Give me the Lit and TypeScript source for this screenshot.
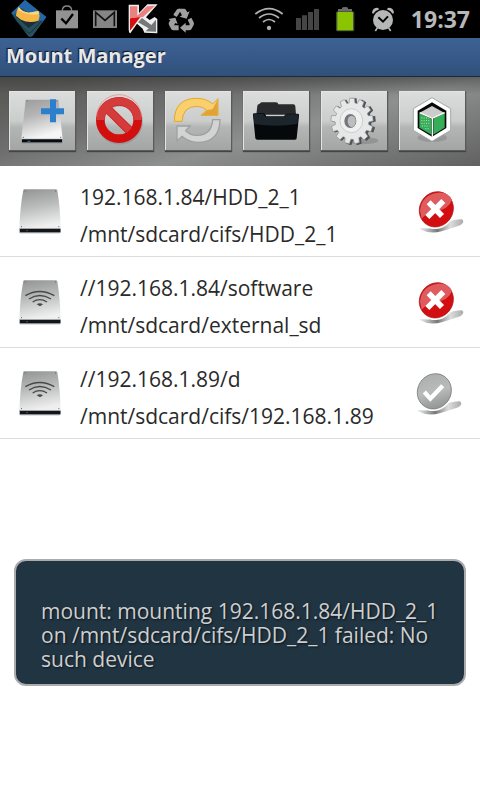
import { LitElement, html, css, svg, nothing } from "lit";
import { customElement, property } from "lit/decorators.js";

type Mount = { source: string; target: string; network: boolean; mounted: boolean };

const MOUNTS: Mount[] = [
  { source: "192.168.1.84/HDD_2_1", target: "/mnt/sdcard/cifs/HDD_2_1", network: false, mounted: false },
  { source: "//192.168.1.84/software", target: "/mnt/sdcard/external_sd", network: true, mounted: false },
  { source: "//192.168.1.89/d", target: "/mnt/sdcard/cifs/192.168.1.89", network: true, mounted: true },
];

const gearPath = (cx: number, cy: number, outer: number, inner: number, teeth: number) => {
  const points: string[] = [];
  for (let i = 0; i < teeth; i++) {
    for (const [f, r] of [[-0.36, inner], [-0.24, outer], [0.24, outer], [0.36, inner]]) {
      const a = ((i + f) / teeth) * Math.PI * 2 - Math.PI / 2;
      points.push(`${(cx + Math.cos(a) * r * 0.92).toFixed(1)} ${(cy + Math.sin(a) * r).toFixed(1)}`);
    }
  }
  return `M${points.join("L")}Z`;
};

/* Status bar glyphs, drawn on a grid of three units to the pixel. */
const statusLeft = [
  html`<svg viewBox="30 0 114 114" aria-hidden="true">
    <path d="M34 39L75 0L139 51L98 107Q90 113 84 107Z" fill="#28505c"/>
    <path d="M34 39L75 0L139 51L126 68L64 24L40 46Z" fill="#2467a8"/>
    <path d="M36 44L48 54L112 66L130 62L98 107Q90 113 84 107Z" fill="#28505c"/>
    <path d="M46 60l38 38q5 4 9-1l32-35" fill="none" stroke="#15303d" stroke-width="3"/>
    <path d="M46 48L90 66L116 62L86 84Z" fill="#1a2f3a"/>
    <path d="M56 21Q66 36 86 38L115 33Q122 46 115 62Q88 71 63 59L48 47Q50 28 56 21Z" fill="#f5b644"/>
    <path d="M56 21Q66 36 86 38L115 33L117 41Q90 50 55 31Z" fill="#f9d785"/>
  </svg>`,
  html`<svg viewBox="144 0 114 114" aria-hidden="true">
    <path d="M187 32Q187 18 201 18Q215 18 215 32" fill="none" stroke="#858585" stroke-width="4"/>
    <rect x="168" y="31" width="66" height="54" fill="#929292"/>
    <path d="M184 56L198 70L219 42" fill="none" stroke="#000" stroke-width="7"/>
  </svg>`,
  html`<svg viewBox="258 0 114 114" aria-hidden="true">
    <rect x="279" y="31" width="72" height="53" fill="#858585"/>
    <path d="M287 79V37L315 61L343 37V79" fill="none" stroke="#121212" stroke-width="5"/>
  </svg>`,
  html`<svg viewBox="372 0 114 114" aria-hidden="true">
    <path d="M386 14H417V39L442 13H473L438 52L449 60L464 51L472 57V100L433 98L428 86L411 71L391 100Q386 98 386 86Z" fill="#eee"/>
    <path d="M390 55L423 49L390 92Z" fill="#d80f0f"/>
    <path d="M390 19H412V47L441 19L465 17L429 51L390 55Z" fill="#eb8080"/>
    <path d="M414 67L426 54L454 75L468 59V95L437 94L446 85Z" fill="#747878"/>
  </svg>`,
  html`<svg viewBox="486 0 114 114" aria-hidden="true">
    <g fill="#a0a0a0">
      <path d="M520 45L530 29Q532 26 536 26H541L530 51Z"/>
      <path d="M538 26H552Q556 26 558 30L562 37L569 34L560 56L539 50L546 46L540 35L533 47L521 41Z"/>
      <path d="M563 59L574 53L581 67Q583 71 581 75L574 88Q572 91 567 91H557V98L540 83L557 68V76H567Q570 76 569 72Z"/>
      <path d="M536 76V91H520Q516 91 514 88L507 75Q505 71 507 67L511 61L505 57L526 53L533 72L526 69L522 76Z"/>
    </g>
  </svg>`,
];

const statusRight = [
  html`<svg viewBox="30 0 114 114" aria-hidden="true">
    <g fill="none" stroke="#b0b3b3" stroke-width="5">
      <path d="M46 42Q87 10 128 42"/><path d="M57 54Q87 30 117 54"/><path d="M69 66Q87 51 105 66"/>
    </g>
    <circle cx="87" cy="84" r="6.500" fill="#b0b3b3"/>
  </svg>`,
  html`<svg viewBox="144 0 114 114" aria-hidden="true">
    <path d="M168 54h15v36h-15zM186 46h15v44h-15zM204 36h15v54h-15zM222 27h15v63h-15z" fill="#454545"/>
  </svg>`,
  html`<svg viewBox="258 0 114 114" aria-hidden="true">
    <path d="M306 27v-3q0-3 9-3t9 3v3h12v9h-42v-9z" fill="#6c6c6c"/>
    <rect x="288" y="34" width="55" height="60" rx="5" fill="#46503a"/>
    <rect x="292" y="36" width="47" height="55" rx="2" fill="#8bc400"/>
  </svg>`,
  html`<svg viewBox="372 0 114 114" aria-hidden="true">
    <path d="M406 93L413 82M452 93L445 82" stroke="#b5b7b7" stroke-width="5"/>
    <path d="M396 39Q397 23 413 23L418 28Q406 32 400 41ZM462 39Q461 23 445 23L440 28Q452 32 458 41Z" fill="#b5b7b7"/>
    <circle cx="429" cy="60" r="30" fill="#b5b7b7"/>
    <path d="M415 52L429 65L444 49" fill="none" stroke="#000" stroke-width="6"/>
  </svg>`,
];

const tools = [
  {
    label: "Add mount",
    art: html`<svg viewBox="27 44 201 180" aria-hidden="true">
      <defs><linearGradient id="m" x2="0.3" y2="1"><stop stop-color="#9b9b9b"/><stop offset="0.450" stop-color="#b6b6b6"/><stop offset="1" stop-color="#f5f5f5"/></linearGradient></defs>
      <path d="M77 70H175L188 188H64Z" fill="url(#m)"/>
      <path d="M64 187H188V198Q188 202 184 202H68Q64 202 64 198Z" fill="#999"/>
      <rect x="66" y="189" width="120" height="9" fill="#070b0f"/>
      <path d="M82 195h9" stroke="#286078" stroke-width="4"/>
      <path d="M68 183h4M180 183h4M79 74h4M169 74h4" stroke="#777" stroke-width="3"/>
      <path d="M150 69H168V96H192V114H168V138H150V114H123V96H150Z" fill="#2b7fcc"/>
    </svg>`,
  },
  {
    label: "Unmount all",
    art: html`<svg viewBox="261 44 201 180" aria-hidden="true">
      <circle cx="359" cy="135" r="57" fill="none" stroke="#888" stroke-opacity="0.500" stroke-width="25"/>
      <circle cx="357" cy="131" r="56" fill="none" stroke="#d20e0e" stroke-width="26"/>
      <path d="M317 92L397 171" stroke="#d20e0e" stroke-width="26"/>
      <path d="M301 131A56 56 0 0 1 413 131" fill="none" stroke="#d43c3c" stroke-width="24"/>
      <path d="M318 93L388 162" stroke="#d43c3c" stroke-width="22"/>
      <path d="M290 122A67 67 0 0 1 424 122" fill="none" stroke="#e88282" stroke-width="2"/>
    </svg>`,
  },
  {
    label: "Refresh",
    art: html`<svg viewBox="15 44 201 180" aria-hidden="true">
      <path d="M43 135Q43 66 111 66Q139 66 158 83L174 67V117H123L140 101Q128 90 111 90Q68 90 66 135Z" fill="#fad06d" stroke="#e5a72c" stroke-width="3"/>
      <path d="M173 70V116H126L143 101L158 98Z" fill="#e0a338"/>
      <path d="M180 130Q179 198 112 198Q86 198 66 180L51 193V149H90L77 163Q92 178 112 177Q155 176 158 130Z" fill="#d2d4d4" stroke="#a0a0a0" stroke-width="4"/>
    </svg>`,
  },
  {
    label: "Browse files",
    art: html`<svg viewBox="249 44 201 180" aria-hidden="true">
      <path d="M289 115L292 88Q293 84 298 83L304 78H348Q354 78 355 84H400Q405 84 406 90L408 115Z" fill="#282a2c"/>
      <path d="M279 116Q278 111 283 111H309Q315 111 317 116L319 120H372L377 114Q379 112 384 112H413Q418 112 417 118L410 186Q410 190 405 190H292Q287 190 286 186Z" fill="#05090c"/>
      <path d="M280 115Q280 113 283 113H309L318 122H373L380 114H415L412 143Q346 154 283 143Z" fill="#1c252b"/>
    </svg>`,
  },
  {
    label: "Settings",
    art: html`<svg viewBox="3 44 201 180" aria-hidden="true">
      <ellipse cx="125" cy="193" rx="50" ry="11" fill="#777" opacity="0.450"/>
      <path d=${gearPath(102, 136, 71, 57, 13)} fill="#4a5458"/>
      <path d=${gearPath(96, 134, 69, 55, 13)} fill="#e6e7e7" stroke="#8f8f8f" stroke-width="2"/>
      <ellipse cx="94" cy="133" rx="34" ry="36" fill="#f0f0f0" stroke="#ccc" stroke-width="3"/>
      <ellipse cx="91" cy="134" rx="18" ry="21" fill="#70787b"/>
      <ellipse cx="95" cy="135" rx="12" ry="17" fill="#bdbdbd"/>
    </svg>`,
  },
  {
    label: "Modules",
    art: html`<svg viewBox="237 44 201 180" aria-hidden="true">
      <ellipse cx="337" cy="184" rx="44" ry="13" fill="#777" opacity="0.400"/>
      <path d="M336 64L392 97V162L336 195L280 162V97Z" fill="#fff" stroke="#a8a8a8" stroke-width="3"/>
      <path d="M336 78L379 103V155L336 181L293 155V103Z" fill="#080808"/>
      <path d="M336 89L374 110L337 125L299 109Z" fill="#ccc"/>
      <path d="M298 110L334 127V175L298 154Z" fill="#35ad57"/>
      <path d="M340 127L374 110V154L340 175Z" fill="#36ad58"/>
      <path d="M299 109L337 126L374 109M337 125V181" fill="none" stroke="#fff" stroke-width="4"/>
      <path d="M304 125H326M304 133H328M304 141H328M306 149H328M316 157H328" stroke="#b9e5c3" stroke-width="3" stroke-dasharray="3 4"/>
    </svg>`,
  },
];

@customElement("mount-row")
class MountRow extends LitElement {
  @property({ attribute: false }) mount!: Mount;

  static styles = css`
    :host { display: flex; align-items: flex-start; padding: 13px 15px 3px 19px; border-bottom: 1px solid #dcdcdc; }
    .drive { width: 42px; height: 46px; flex: none; margin-top: 9px; }
    .text { flex: 1; min-width: 0; margin-left: 19px; }
    .line { margin: 0; font-size: 21px; line-height: 37px; color: #2a2a2a; overflow-wrap: anywhere; }
    .toggle { flex: none; margin: 9px 0 0; padding: 0; border: 0; background: none; display: block; }
    .state { display: block; width: 49px; height: 47px; }
  `;

  render() {
    const { source, target, network, mounted } = this.mount;
    return html`
      <svg class="drive" viewBox="57 54 126 138" aria-hidden="true">
        <defs><linearGradient id="m" x2="0.2" y2="1"><stop stop-color="#919393"/><stop offset="0.500" stop-color="#bbbdbd"/><stop offset="1" stop-color="#efefef"/></linearGradient></defs>
        <path d="M70 60Q70 58 73 58H168Q171 58 172 61Q181 115 182 178H58Q60 110 70 60Z" fill="url(#m)"/>
        <path d="M58 175H182V186Q182 190 178 190H62Q58 190 58 186Z" fill="#8c8c8c"/>
        <rect x="60" y="177" width="121" height="9" fill="#11161a"/>
        <path d="M79 182h4" stroke="#7b868c" stroke-width="2"/>
        <path d="M74 63h3M165 63h3M63 170h3M175 170h3" stroke="#666" stroke-width="3"/>
        ${network
          ? svg`<g fill="none" stroke="#484848" stroke-width="4">
              <path d="M76 104Q119 79 163 104"/><path d="M87 114Q119 93 153 114"/><path d="M98 123Q119 109 141 123"/>
            </g><path d="M110 130Q119 124 129 130L120 136Z" fill="#484848"/>`
          : nothing}
      </svg>
      <div class="text">
        <p class="line">${source}</p>
        <p class="line">${target}</p>
      </div>
      <button class="toggle" aria-label=${mounted ? "Unmount" : "Mount"}>
        <svg class="state" viewBox="48 54 147 141" aria-hidden="true">
          <defs>
            <linearGradient id="s"><stop stop-color="#eee"/><stop offset="0.400" stop-color="#777"/><stop offset="0.700" stop-color="#ddd"/><stop offset="1" stop-color="#aaa"/></linearGradient>
            <linearGradient id="g" x2="1" y2="1"><stop stop-color="#a9abab"/><stop offset="0.500" stop-color="#b9bbbb"/><stop offset="1" stop-color="#838585"/></linearGradient>
          </defs>
          ${mounted
            ? svg`<path d="M54 173Q88 180 121 166Q148 147 180 148Q190 156 175 166Q143 177 119 184Q83 194 54 178Z" fill="url(#s)" />
                <ellipse cx="104" cy="118" rx="54" ry="60" transform="rotate(22 104 118)" fill="#fff"/>
                <ellipse cx="103" cy="118" rx="50" ry="54" transform="rotate(32 103 118)" fill="url(#g)" stroke="#6f7171" stroke-width="2"/>
                <path d="M73 120L91 140L128 101" fill="none" stroke="#fff" stroke-width="13"/>`
            : svg`<path d="M60 173Q94 180 127 166Q154 147 186 148Q196 156 181 166Q149 177 125 184Q89 194 60 178Z" fill="url(#s)" />
                <ellipse cx="110" cy="118" rx="54" ry="60" transform="rotate(22 110 118)" fill="#fff"/>
                <ellipse cx="109" cy="118" rx="50" ry="54" transform="rotate(32 109 118)" fill="#d30e10" stroke="#a51518" stroke-width="2"/>
                <path d="M60 122Q65 74 113 68Q145 66 156 90Q145 120 105 123Q79 129 65 146Z" fill="#df5b5d"/>
                <path d="M86 97L126 138M130 93L82 141" stroke="#fff" stroke-width="17"/>`}
        </svg>
      </button>
    `;
  }
}

@customElement("app-root")
class AppRoot extends LitElement {
  static styles = css`
    :host { display: flex; flex-direction: column; position: relative; min-height: 100vh; background: #fff; font-family: "Open Sans", "Noto Sans", sans-serif; }
    .status { display: flex; align-items: center; height: 38px; padding: 0 10px; background: #000; }
    .status svg { display: block; width: 38px; height: 38px; }
    .group { display: flex; }
    .right { margin-left: auto; }
    .clock { width: 68px; text-align: right; font-size: 23px; font-weight: 700; line-height: 38px; color: #b8b8b8; }
    .title { margin: 0; padding: 0 6px 2px; font-size: 20px; line-height: 36px; font-weight: 700; color: #e8e8e8; text-shadow: -1px -1px 1px #111; background: linear-gradient(#3d6291, #37598a 50%, #305179); }
    .tools { display: grid; grid-template-columns: repeat(6, 1fr); gap: 11px; padding: 14px 14px 15px 9px; border-top: 1px solid #1c2b36; background: linear-gradient(rgba(50, 50, 50, 0.5), rgba(50, 50, 50, 0) 20%), linear-gradient(165deg, #5b5c5a 10%, #6e6f6e 35%, #8e908f 60%, #606160 100%); }
    .tool { height: 60px; padding: 0; border: 0; background: linear-gradient(#dcdddd, #cbcccc 50%, #b4b5b5 60%, #a3a4a4); box-shadow: inset -1px -1px #5a5a5a, inset 1px 1px #e4e4e4, 0 1px 1px #444; }
    .tool svg { display: block; width: 100%; height: 60px; }
    .toast { position: absolute; left: 14px; right: 14px; bottom: 114px; box-sizing: border-box; padding: 38px 25px 13px; border: 2px solid #ababab; border-radius: 12px; background: #203442; color: #cfcfcf; font-size: 21px; line-height: 24px; text-shadow: 1px 1px 2px #0c151b; }
  `;

  render() {
    return html`
      <header class="status">
        <div class="group">${statusLeft}</div>
        <div class="group right">${statusRight}</div>
        <time class="clock">19:37</time>
      </header>
      <h1 class="title">Mount Manager</h1>
      <nav class="tools">
        ${tools.map((t) => html`<button class="tool" aria-label=${t.label}>${t.art}</button>`)}
      </nav>
      <main>${MOUNTS.map((m) => html`<mount-row .mount=${m}></mount-row>`)}</main>
      <div class="toast" role="status">mount: mounting 192.168.1.84/HDD_2_1 on /mnt/sdcard/cifs/HDD_2_1 failed: No such device</div>
    `;
  }
}
